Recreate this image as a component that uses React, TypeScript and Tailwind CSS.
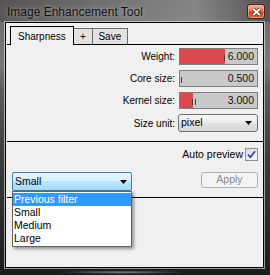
import React from "react";

const font = "font-['Liberation_Sans',Arial,sans-serif]";

function Arrow() {
  return (
    <svg width="7" height="4" viewBox="0 0 7 4" className="shrink-0">
      <path d="M0 0H7L3.5 4Z" fill="#000" />
    </svg>
  );
}

interface SliderProps {
  fill: number;
  ticks: number[];
  value: string;
}

function SliderBox({ fill, ticks, value }: SliderProps) {
  return (
    <div className="relative ml-px flex h-[17px] w-[79px] items-center justify-end border border-[#7f7f7f] bg-[#c9c9c9] pr-[3px]">
      {fill > 0 && <div className="absolute bottom-0 left-0 top-0 bg-[#dc4850]" style={{ width: fill }} />}
      {ticks.map((t) => (
        <div key={t} className="absolute top-[6px] h-[6px] w-px bg-[#4a3a3a]" style={{ left: t }} />
      ))}
      <span className="relative text-[10.5px] leading-none text-[#111]">{value}</span>
    </div>
  );
}

export default function App() {
  const options = ["Previous filter", "Small", "Medium", "Large"];

  return (
    <div className={`${font} relative h-[275px] w-[270px] overflow-hidden bg-[linear-gradient(180deg,#6b6868_0%,#7a7878_24%,#5c5c5c_32%,#3a3a3a_60%,#1c1c1c_100%)]`}>
      {/* Title bar */}
      <div className="flex h-[22px] bg-[linear-gradient(90deg,rgba(50,45,45,0.35)_0%,rgba(255,255,255,0.08)_45%,rgba(255,255,255,0.18)_72%,rgba(40,40,40,0.35)_100%)]">
        <span className="ml-[7px] mt-[5px] text-[12px] leading-[14px] text-[#141414] [text-shadow:0_0_5px_rgba(255,255,255,0.55)]">
          Image Enhancement Tool
        </span>
        <div className="ml-auto mr-[5px] mt-[4px] flex h-[15px] w-[18px] items-center justify-center rounded-[3px] border border-[#4a2318] bg-[linear-gradient(180deg,#eeb09a_0%,#dc7a60_45%,#c8431f_55%,#d8683f_100%)] shadow-[inset_0_0_0_1px_rgba(255,220,200,0.45)]">
          <svg width="9" height="8" viewBox="0 0 9 8">
            <path d="M1.2 1L7.8 7M7.8 1L1.2 7" stroke="#5a2a1e" strokeWidth="3.2" />
            <path d="M1.2 1L7.8 7M7.8 1L1.2 7" stroke="#fff" strokeWidth="1.7" />
          </svg>
        </div>
      </div>

      {/* Client area */}
      <div className="ml-[5px] flex h-[246px] w-[259px] flex-col border border-black bg-[#f0f0f0] shadow-[0_0_0_1px_rgba(255,255,255,0.55)]">
        {/* Tabs */}
        <div className="ml-px mt-[3px] flex h-[19px] items-end border-b border-black">
          <div className="-mb-px ml-[3px] flex h-[19px] items-center border border-b-0 border-black bg-[#f0f0f0] px-[7px] text-[10px] text-black">
            Sharpness
          </div>
          <div className="flex h-[16px] w-[19px] items-center justify-center border border-l-0 border-b-0 border-[#6a6a6a] bg-[#e2e2e2] text-[10px] text-black">
            +
          </div>
          <div className="flex h-[16px] w-[35px] items-center justify-center border border-l-0 border-b-0 border-[#6a6a6a] bg-[#e2e2e2] text-[10px] text-black">
            Save
          </div>
        </div>

        {/* Parameters */}
        <div className="grid grid-cols-[1fr_80px] items-center gap-x-[3px] gap-y-[5px] pr-[5px] pt-[3px] text-[10px] text-black">
          <span className="text-right">Weight:</span>
          <SliderBox fill={45} ticks={[44]} value="6.000" />
          <span className="text-right">Core size:</span>
          <SliderBox fill={0} ticks={[1]} value="0.500" />
          <span className="text-right">Kernel size:</span>
          <SliderBox fill={13} ticks={[12, 15]} value="3.000" />
          <span className="text-right">Size unit:</span>
          <div className="flex h-[18px] items-center justify-between rounded-[3px] border border-[#707070] bg-[linear-gradient(180deg,#f7f7f7_0%,#ececec_50%,#e1e1e1_51%,#d8d8d8_100%)] pl-[2px] pr-[5px] text-[10.5px]">
            <span>pixel</span>
            <Arrow />
          </div>
        </div>

        <div className="ml-px mt-[9px] h-px bg-black" />

        {/* Auto preview */}
        <div className="mt-[6px] flex h-[13px] items-center justify-end gap-[2px] pr-[5px] leading-none">
          <span className="text-[10.5px] text-black">Auto preview</span>
          <div className="flex h-[13px] w-[13px] items-center justify-center border border-[#8e8f8f] bg-[linear-gradient(135deg,#d8dee6_0%,#f4f6f9_100%)]">
            <svg width="9" height="9" viewBox="0 0 9 9">
              <path d="M1 4.6L3.4 7.2L8 1.2" fill="none" stroke="#2b46a8" strokeWidth="1.7" />
            </svg>
          </div>
        </div>

        {/* Preset + Apply */}
        <div className="mt-[11px] flex items-start justify-between pl-[6px] pr-[5px]">
          <div className="relative">
            <div className="flex h-[19px] w-[120px] items-center justify-between rounded-[2px] border border-[#3c7fb1] bg-[linear-gradient(180deg,#eaf6fd_0%,#d9f0fc_45%,#bee6fd_50%,#a7d9f5_100%)] pl-[2px] pr-[4px] text-[10.5px] text-black">
              <span>Small</span>
              <Arrow />
            </div>
            <div className="absolute left-0 top-full z-10 w-[120px] border border-[#646464] bg-white py-px shadow-[2px_2px_3px_rgba(0,0,0,0.4)]">
              {options.map((o, i) => (
                <div
                  key={o}
                  className={`h-[13px] pl-px text-[10.5px] leading-[13px] ${i === 0 ? "bg-[#3399ff] text-white" : "text-black"}`}
                >
                  {o}
                </div>
              ))}
            </div>
          </div>
          <div className="flex h-[16px] w-[57px] items-center justify-center rounded-[3px] border border-[#adb2b5] bg-[#f4f4f4] text-[10.5px] text-[#8a8a8a]">
            Apply
          </div>
        </div>

        <div className="ml-px mt-[6px] h-px bg-black" />
      </div>

      {/* Bottom frame highlight */}
      <div className="h-[7px] bg-[radial-gradient(ellipse_at_45%_60%,rgba(190,215,240,0.55)_0%,transparent_30%)]" />
    </div>
  );
}
